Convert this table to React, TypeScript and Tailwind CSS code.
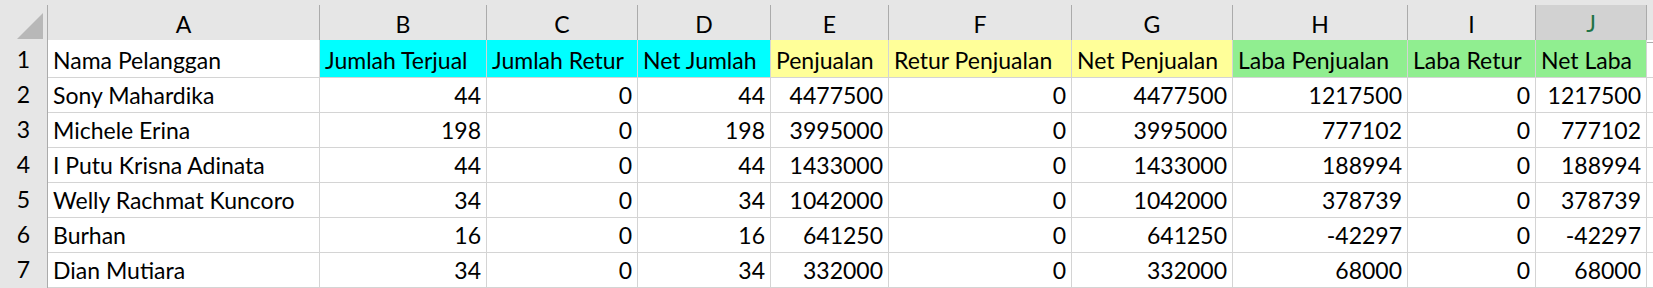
const columns = ["A", "B", "C", "D", "E", "F", "G", "H", "I", "J"];

const widths = "grid-cols-[48px_272px_167px_151px_133px_118px_183px_161px_175px_128px_111px_1fr]";

const headings = [
  { text: "Nama Pelanggan", bg: "bg-white" },
  { text: "Jumlah Terjual", bg: "bg-[#00ffff]" },
  { text: "Jumlah Retur", bg: "bg-[#00ffff]" },
  { text: "Net Jumlah", bg: "bg-[#00ffff]" },
  { text: "Penjualan", bg: "bg-[#ffff99]" },
  { text: "Retur Penjualan", bg: "bg-[#ffff99]" },
  { text: "Net Penjualan", bg: "bg-[#ffff99]" },
  { text: "Laba Penjualan", bg: "bg-[#90ee90]" },
  { text: "Laba Retur", bg: "bg-[#90ee90]" },
  { text: "Net Laba", bg: "bg-[#90ee90]" },
];

const rows: (string | number)[][] = [
  ["Sony Mahardika", 44, 0, 44, 4477500, 0, 4477500, 1217500, 0, 1217500],
  ["Michele Erina", 198, 0, 198, 3995000, 0, 3995000, 777102, 0, 777102],
  ["I Putu Krisna Adinata", 44, 0, 44, 1433000, 0, 1433000, 188994, 0, 188994],
  ["Welly Rachmat Kuncoro", 34, 0, 34, 1042000, 0, 1042000, 378739, 0, 378739],
  ["Burhan", 16, 0, 16, 641250, 0, 641250, -42297, 0, -42297],
  ["Dian Mutiara", 34, 0, 34, 332000, 0, 332000, 68000, 0, 68000],
];

const font = { fontFamily: "Lato, 'Liberation Sans', sans-serif" };

export default function App() {
  return (
    <div className="w-[1653px] h-[288px] overflow-hidden bg-white text-black text-[23px]" style={font}>
      {/* column header strip */}
      <div className="h-[5px] bg-[#e6e6e6]" />
      <div className={`grid ${widths} h-[35px] bg-[#e6e6e6]`}>
        <div className="border-r border-b border-[#ababab] flex items-end justify-end pr-[4px] pb-[3px]">
          <div className="w-0 h-0 border-l-[26px] border-l-transparent border-b-[26px] border-b-[#b8b8b8]" />
        </div>
        {columns.map((c) =>
          c === "J" ? (
            <div key={c} className="bg-[#d2d2d2] border-r border-[#ababab] border-b-2 border-b-[#217346] flex items-center justify-center text-[#217346] pt-[1px]">
              {c}
            </div>
          ) : (
            <div key={c} className="border-r border-b border-[#ababab] flex items-center justify-center pt-[1px]">
              {c}
            </div>
          )
        )}
        <div className="border-b border-[#ababab]" />
      </div>

      {/* row 1 */}
      <div className={`grid ${widths} h-[35px]`}>
        <div className="bg-[#e6e6e6] border-r border-b border-[#ababab] flex items-center justify-center pt-[2px]">1</div>
        {headings.map((h) => (
          <div key={h.text} className={`${h.bg} border-r border-b border-[#d4d4d4] flex items-center px-[5px] pt-[3px] whitespace-nowrap overflow-hidden`}>
            {h.text}
          </div>
        ))}
        <div className="border-b border-[#d4d4d4]" />
      </div>

      {rows.map((r, i) => (
        <div key={i} className={`grid ${widths} h-[35px]`}>
          <div className="bg-[#e6e6e6] border-r border-b border-[#ababab] flex items-center justify-center pt-[2px]">{i + 2}</div>
          {r.map((v, j) => (
            <div
              key={j}
              className={`border-r border-b border-[#d4d4d4] flex items-center px-[5px] pt-[3px] whitespace-nowrap overflow-hidden ${j === 0 ? "justify-start" : "justify-end"}`}
            >
              {v}
            </div>
          ))}
          <div className="border-b border-[#d4d4d4]" />
        </div>
      ))}

      {/* row 8, cut off */}
      <div className={`grid ${widths} h-[35px]`}>
        <div className="bg-[#e6e6e6] border-r border-[#ababab]" />
        {columns.map((c) => (
          <div key={c} className="border-r border-[#d4d4d4]" />
        ))}
        <div />
      </div>
    </div>
  );
}
